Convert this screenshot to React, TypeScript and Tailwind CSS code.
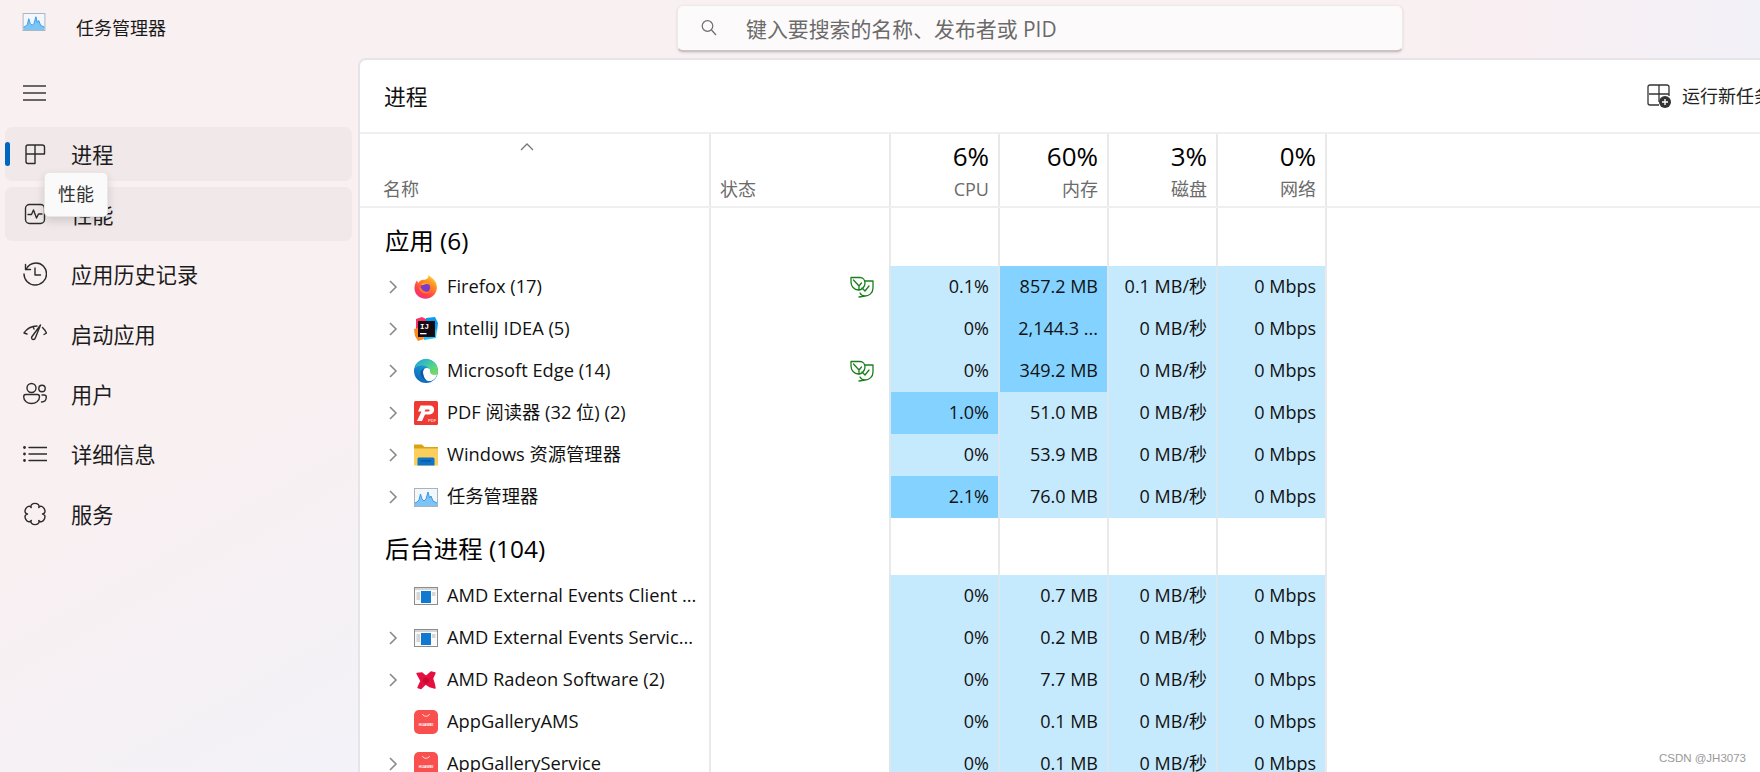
import type { ReactNode } from 'react'

const FONT = "font-['Open_Sans','Noto_Sans_CJK_SC',sans-serif]"

function TaskIcon({ className }: { className: string }) {
  return (
    <svg className={className} viewBox="0 0 24 19">
      <rect x="0.5" y="0.5" width="23" height="18" fill="#f2f7fb" stroke="#a9b3bd" />
      <path d="M1 15 L3 14 L5 12 L6.5 6 L8 11 L10 13 L12 11 L14 4 L15.5 10 L17 8 L19 13 L23 15 V18 H1 Z" fill="#7cc4f5" />
      <path d="M1 15 L3 14 L5 12 L6.5 6 L8 11 L10 13 L12 11 L14 4 L15.5 10 L17 8 L19 13 L23 15" fill="none" stroke="#2f8fe0" strokeWidth="0.9" />
    </svg>
  )
}

function FirefoxIcon() {
  return (
    <svg className="w-6 h-6" viewBox="0 0 24 24">
      <defs>
        <linearGradient id="ffa" x1="0.8" y1="0" x2="0.2" y2="1">
          <stop offset="0" stopColor="#ffd53a" />
          <stop offset="0.35" stopColor="#ff8a22" />
          <stop offset="0.75" stopColor="#ff3b50" />
          <stop offset="1" stopColor="#f0308a" />
        </linearGradient>
      </defs>
      <path d="M14.5 0 C17 2.5 20 4 21.5 7 C23.5 11 23.5 16 20 20 C17 23.5 11.5 24.5 7.5 23 C3 21.5 0.5 17.5 0.5 13 C0.5 10.5 1.2 8 2.8 5.5 L4.5 8 C5.5 5.8 7.5 5 9.5 4.8 C12 4.5 14.5 4 14.5 0 Z" fill="url(#ffa)" />
      <circle cx="11.5" cy="12.5" r="4.6" fill="#7a3bc8" />
      <path d="M6.5 9.5 C9 6.8 13 6.8 16 9.5 C13.5 8.6 11.5 8.8 10 9.8 C9 10.4 8 10.3 6.5 9.5 Z" fill="#ffa12a" />
      <path d="M5 12.5 C5.5 18 12 20.5 17 16.5 C13.5 17.8 9 17 7 13 Z" fill="#ff7a2a" />
    </svg>
  )
}

function IdeaIcon() {
  return (
    <svg className="w-6 h-6" viewBox="0 0 24 24">
      <path d="M2 2 L8 0 L12 2 L12 12 L2 14 Z" fill="#f9326c" />
      <path d="M0 12 L8 10 L10 22 L4 24 L1 19 Z" fill="#fc8a1c" />
      <path d="M12 1 L21 0 L24 6 L23 14 L12 12 Z" fill="#0a9cf0" />
      <path d="M10 14 L23 12 L22 21 L10 23 Z" fill="#19c4f0" />
      <rect x="4" y="4" width="17" height="16" fill="#140a10" />
      <text x="6" y="11.5" fontSize="7.5" fontWeight="700" fill="#fff" fontFamily="'Liberation Mono',monospace">IJ</text>
      <rect x="6" y="16" width="6.5" height="1.3" fill="#fff" />
    </svg>
  )
}

function EdgeIcon() {
  return (
    <svg className="w-6 h-6" viewBox="0 0 24 24">
      <defs>
        <linearGradient id="ega" x1="0" y1="1" x2="0.5" y2="0">
          <stop offset="0" stopColor="#0a5fb4" />
          <stop offset="1" stopColor="#23a6df" />
        </linearGradient>
        <linearGradient id="egb" x1="0.2" y1="0" x2="1" y2="0.8">
          <stop offset="0" stopColor="#25a9d9" />
          <stop offset="0.6" stopColor="#4fd38c" />
          <stop offset="1" stopColor="#7ddb5a" />
        </linearGradient>
      </defs>
      <circle cx="12" cy="12" r="12" fill="url(#ega)" />
      <path d="M1 9 C3 3 8 0 12 0 C19 0 24 6 24 12.5 C24 15.5 21 17 18 16.5 C15 16 16 12 15 10 C13 6 5 5 1 9 Z" fill="url(#egb)" />
      <path d="M9 13 C9 9 13 8 15.5 10 C16.5 11.5 15.5 14 17.5 15.2 C19.5 16.3 21.5 16 23 15.2 C22 20 18 22.5 14.5 22 C11 21.5 9 17 9 13 Z" fill="#fff" />
      <path d="M9 13 C9 17 11 21.5 14.5 22 C15.5 22.2 16.5 22.1 17.5 21.8 C14 23 8 20 6.5 15.5 C6 13 7.5 10 10.5 9.5 C9.5 10.5 9 11.5 9 13 Z" fill="#0c59a4" />
    </svg>
  )
}

function PdfIcon() {
  return (
    <svg className="w-6 h-6" viewBox="0 0 24 24">
      <rect width="24" height="24" rx="1.5" fill="#ee3a32" />
      <path d="M3 20 L7.5 10.5 H4 L6.5 4.5 H16.5 C21.5 4.5 21.5 13.5 15.5 13.5 H11 L8 20 Z M11.5 8.5 L10.6 10.5 H14.5 C16 10.5 16 8.5 14.5 8.5 Z" fill="#fff" fillRule="evenodd" />
      <text x="14" y="20.5" fontSize="4.2" fontWeight="700" fill="#f9c9c6" fontFamily="'Liberation Sans',sans-serif">PDF</text>
    </svg>
  )
}

function FolderIcon() {
  return (
    <svg className="w-6 h-6" viewBox="0 0 24 21">
      <path d="M0 0 H8 L10.5 2.5 H24 V6 H0 Z" fill="#dca216" />
      <rect y="4" width="24" height="17" fill="#fbcf5b" />
      <path d="M3.5 21 V14.5 C3.5 13.5 4.2 13 5 13 H18.5 C19.5 13 20.5 13.5 20.5 14.5 V21 Z" fill="#0d74c8" />
      <rect x="7" y="16" width="10" height="1" fill="#094d8a" />
    </svg>
  )
}

function AmdExeIcon() {
  return (
    <svg className="w-6 h-[18px]" viewBox="0 0 24 18">
      <rect x="0.5" y="0.5" width="23" height="17" fill="#fafafa" stroke="#8c8c8c" />
      <rect x="1" y="1" width="22" height="2" fill="#d5d5d5" />
      <path d="M2.5 6 H6 M2.5 8 H6 M2.5 10 H6 M2.5 12 H6 M18 6 H21.5 M18 8 H21.5" stroke="#aaa" strokeWidth="0.9" />
      <rect x="7" y="4" width="10" height="12" fill="#0f7ad0" />
    </svg>
  )
}

function RadeonIcon() {
  return (
    <svg className="w-6 h-6" viewBox="0 0 24 24">
      <path d="M3 5.5 L8 5 L12 8.5 L17 4 L21 5 L18.5 10.5 L20.5 17 L21 20 L15.5 18.5 L11.5 16 L7 20.5 L4 19.5 L7 13 Z" fill="#e5103f" stroke="#e5103f" strokeWidth="1.4" strokeLinejoin="round" />
      <circle cx="12" cy="12.5" r="3" fill="#c80b33" />
    </svg>
  )
}

function HuaweiIcon() {
  return (
    <svg className="w-6 h-6" viewBox="0 0 24 24">
      <rect width="24" height="24" rx="5" fill="#f9504f" />
      <path d="M8.5 4 C9 7 15 7 15.5 4" fill="none" stroke="#fff" strokeWidth="0.8" />
      <text x="12" y="15.5" textAnchor="middle" fontSize="3.6" fontWeight="700" fill="#fff" fontFamily="'Liberation Sans',sans-serif">HUAWEI</text>
    </svg>
  )
}

function LeafIcon() {
  return (
    <svg className="w-6 h-[22px] ml-auto" viewBox="0 0 24 22" fill="none" stroke="#1a7f1a" strokeWidth="1.3" strokeLinejoin="round" strokeLinecap="round">
      <path d="M1 1.5 H10 C13 1.5 15 4 15 7 C15 11 12 14 8.5 14 C4 14 1 10 1 6 Z" />
      <path d="M3.5 4 L9 10 V14 M9 10 L11.5 7" />
      <path d="M15 5 H23 V12 C23 17 19 20 15 20 C13 20 11 19 10 17 M15 20 L9 21 M15 15 L19 10 M15 15 L12 12" />
    </svg>
  )
}

function NavIcon({ name }: { name: string }) {
  const common = { fill: 'none', stroke: '#2c2c2c', strokeWidth: 1.4, strokeLinecap: 'round' as const, strokeLinejoin: 'round' as const }
  if (name === 'proc') {
    return (
      <svg className="w-6 h-6" viewBox="0 0 24 24" {...common}>
        <path d="M3 5 C3 3.8 3.8 3 5 3 H19 C20.2 3 21.5 3.8 21.5 5 V12 H12 V21.5 H5 C3.8 21.5 3 20.7 3 19.5 Z M12 3 V12 M3 12 H12" />
      </svg>
    )
  }
  if (name === 'perf') {
    return (
      <svg className="w-6 h-6" viewBox="0 0 24 24" {...common}>
        <rect x="2.5" y="2.5" width="19" height="19" rx="4" />
        <path d="M5 12.5 H8.5 L10.5 8 L13.5 16 L15.5 12 H19" />
      </svg>
    )
  }
  if (name === 'history') {
    return (
      <svg className="w-6 h-6" viewBox="0 0 24 24" {...common}>
        <path d="M2.5 2.5 V7.5 H7.5" />
        <path d="M3 7.5 C5 3.5 9 1 13 1 C19 1 23.5 6 23.5 12 C23.5 18 18.5 23 12 23 C6 23 1 18 1 12" />
        <path d="M12 6 V13 H17.5" />
      </svg>
    )
  }
  if (name === 'startup') {
    return (
      <svg className="w-6 h-6" viewBox="0 0 24 24" {...common}>
        <path d="M1 11 C4 6.5 9 4 14 4 M19.5 5.5 C21 7 22.5 9 23.5 11 M1 11 L4 12 M23.5 11 L21 12.5 M10 4.5 L11 7" />
        <path d="M17.5 3 L12.5 15.5 C11.5 18.5 8 18 8.7 15 Z" />
      </svg>
    )
  }
  if (name === 'users') {
    return (
      <svg className="w-6 h-6" viewBox="0 0 24 24" {...common}>
        <circle cx="8.5" cy="6" r="4.5" />
        <path d="M2.5 12.5 H14.5 C16 12.5 16.5 13.5 16.5 15 C16.5 19 12.5 21.5 8.5 21.5 C4.5 21.5 0.7 19 0.7 15 C0.7 13.5 1.2 12.5 2.5 12.5 Z" />
        <circle cx="19" cy="6.5" r="3.2" />
        <path d="M19 13 H21 C22.5 13 23.3 14 23.3 15 C23.3 18 21.5 20 18.5 20" />
      </svg>
    )
  }
  if (name === 'list') {
    return (
      <svg className="w-6 h-6" viewBox="0 0 24 24" {...common}>
        <path d="M6 5.5 H24 M6 12 H24 M6 18.5 H24" />
        <circle cx="1.5" cy="5.5" r="0.7" fill="#2c2c2c" />
        <circle cx="1.5" cy="12" r="0.7" fill="#2c2c2c" />
        <circle cx="1.5" cy="18.5" r="0.7" fill="#2c2c2c" />
      </svg>
    )
  }
  return (
    <svg className="w-6 h-6" viewBox="0 0 24 24" {...common}>
      <path d="M8.25 5.5 C6 0 18 0 15.75 5.5 C19.39 0.8 25.39 11.2 19.5 12 C25.39 12.8 19.39 23.2 15.75 18.5 C18 24 6 24 8.25 18.5 C4.61 23.2 -1.39 12.8 4.5 12 C-1.39 11.2 4.61 0.8 8.25 5.5 Z" />
    </svg>
  )
}

const navItems = [
  { icon: 'proc', label: '进程', hl: true, active: true },
  { icon: 'perf', label: '性能', hl: true },
  { icon: 'history', label: '应用历史记录' },
  { icon: 'startup', label: '启动应用' },
  { icon: 'users', label: '用户' },
  { icon: 'list', label: '详细信息' },
  { icon: 'services', label: '服务' },
]

type Row = {
  name: string
  icon: ReactNode
  expand: boolean
  leaf?: boolean
  cpu: string
  mem: string
  disk: string
  cpuHot?: boolean
  memHot?: boolean
}

const apps: Row[] = [
  { name: 'Firefox (17)', icon: <FirefoxIcon />, expand: true, leaf: true, cpu: '0.1%', mem: '857.2 MB', disk: '0.1 MB/秒', memHot: true },
  { name: 'IntelliJ IDEA (5)', icon: <IdeaIcon />, expand: true, cpu: '0%', mem: '2,144.3 ...', disk: '0 MB/秒', memHot: true },
  { name: 'Microsoft Edge (14)', icon: <EdgeIcon />, expand: true, leaf: true, cpu: '0%', mem: '349.2 MB', disk: '0 MB/秒', memHot: true },
  { name: 'PDF 阅读器 (32 位) (2)', icon: <PdfIcon />, expand: true, cpu: '1.0%', mem: '51.0 MB', disk: '0 MB/秒', cpuHot: true },
  { name: 'Windows 资源管理器', icon: <FolderIcon />, expand: true, cpu: '0%', mem: '53.9 MB', disk: '0 MB/秒' },
  { name: '任务管理器', icon: <TaskIcon className="w-6 h-[19px]" />, expand: true, cpu: '2.1%', mem: '76.0 MB', disk: '0 MB/秒', cpuHot: true },
]

const background: Row[] = [
  { name: 'AMD External Events Client ...', icon: <AmdExeIcon />, expand: false, cpu: '0%', mem: '0.7 MB', disk: '0 MB/秒' },
  { name: 'AMD External Events Servic...', icon: <AmdExeIcon />, expand: true, cpu: '0%', mem: '0.2 MB', disk: '0 MB/秒' },
  { name: 'AMD Radeon Software (2)', icon: <RadeonIcon />, expand: true, cpu: '0%', mem: '7.7 MB', disk: '0 MB/秒' },
  { name: 'AppGalleryAMS', icon: <HuaweiIcon />, expand: false, cpu: '0%', mem: '0.1 MB', disk: '0 MB/秒' },
  { name: 'AppGalleryService', icon: <HuaweiIcon />, expand: true, cpu: '0%', mem: '0.1 MB', disk: '0 MB/秒' },
]

const GRID = 'grid grid-cols-[349px_180px_109px_109px_109px_109px_1fr]'
const LINE = 'border-l-2 border-[#e9e9e9]'

function GroupRow({ title, height, offset }: { title: string; height: string; offset: string }) {
  return (
    <div className={`${GRID} ${height}`}>
      <div className={`pl-[25px] flex items-center text-[24.4px] text-black whitespace-nowrap ${offset}`}>{title}</div>
      <div className={LINE} />
      <div className={LINE} />
      <div className={LINE} />
      <div className={LINE} />
      <div className={LINE} />
      <div className={LINE} />
    </div>
  )
}

function ValueCell({ value, hot }: { value: string; hot?: boolean }) {
  return (
    <div className={`flex items-center justify-end pr-[9px] pb-[2px] border-l-2 border-[#dbe7ee] text-[18px] text-[#111] ${hot ? 'bg-[#84d2ff]' : 'bg-[#c5e9fd]'}`}>
      {value}
    </div>
  )
}

function ProcRow({ row }: { row: Row }) {
  return (
    <div className={`${GRID} h-[42px]`}>
      <div className="flex items-center min-w-0">
        <div className="w-[54px] pl-[28px] shrink-0">
          {row.expand && (
            <svg className="w-[10px] h-[16px]" viewBox="0 0 10 16" fill="none" stroke="#8a8a8a" strokeWidth="1.6">
              <path d="M2 2 L8 8 L2 14" />
            </svg>
          )}
        </div>
        <div className="w-[24px] shrink-0 flex items-center">{row.icon}</div>
        <span className="ml-[9px] pb-[2px] text-[18.3px] text-[#111] whitespace-nowrap">{row.name}</span>
      </div>
      <div className={`${LINE} flex items-center pr-[15px]`}>{row.leaf && <LeafIcon />}</div>
      <ValueCell value={row.cpu} hot={row.cpuHot} />
      <ValueCell value={row.mem} hot={row.memHot} />
      <ValueCell value={row.disk} />
      <ValueCell value="0 Mbps" />
      <div className={LINE} />
    </div>
  )
}

function HeadCell({ pct, label }: { pct: string; label: string }) {
  return (
    <div className={`${LINE} flex flex-col items-end pr-[9px] pt-[4px]`}>
      <span className="text-[26px] leading-[36px] text-black">{pct}</span>
      <span className="text-[18px] leading-[28px] mt-[1px] text-[#6b6b6b]">{label}</span>
    </div>
  )
}

export default function App() {
  return (
    <div className={`relative h-screen w-screen overflow-hidden flex flex-col bg-[linear-gradient(150deg,#f9f0f1_0%,#f9f0f2_32%,#f0f3fa_62%,#f0f3f8_100%)] ${FONT}`}>
      {/* 标题栏 */}
      <div className="h-[58px] shrink-0 flex bg-[linear-gradient(90deg,#f9f0f1_0%,#f9f0f1_80%,#f9eff3_86%,#f2f1f7_100%)]">
        <div className="w-[677px] shrink-0 flex items-start pl-[22px]">
          <TaskIcon className="w-6 h-[18px] mt-[13px]" />
          <span className="ml-[30px] mt-[15px] text-[18px] leading-[26px] text-[#1a1a1a]">任务管理器</span>
        </div>
        <div className="w-[726px] h-[47px] mt-[5px] flex items-center rounded-[6px] bg-[#fdfafb] border border-[#efe9ea] border-b-2 border-b-[#c9c3c5] shadow-sm">
          <svg className="ml-[22px] w-[18px] h-[18px]" viewBox="0 0 18 18" fill="none" stroke="#6d6d6d" strokeWidth="1.2">
            <circle cx="7.5" cy="7" r="5.3" />
            <path d="M11.5 11 L16 16" />
          </svg>
          <span className="ml-[28px] pt-[3px] text-[20.9px] text-[#6a6a6a]">键入要搜索的名称、发布者或 PID</span>
        </div>
      </div>

      <div className="flex-1 min-h-0 flex">
        {/* 侧边栏 */}
        <div className="w-[358px] shrink-0">
          <div className="h-[69px] flex items-center pl-[23px]">
            <svg className="w-[23px] h-[16px]" viewBox="0 0 23 16" stroke="#3a3a3a" strokeWidth="1.4">
              <path d="M0 1 H23 M0 8 H23 M0 15 H23" />
            </svg>
          </div>
          <div className="flex flex-col gap-[6px] pl-[5px]">
            {navItems.map((item) => (
              <div key={item.label} className={`relative h-[54px] w-[347px] flex items-center rounded-[7px] ${item.hl ? 'bg-[#f0e8e9]' : ''}`}>
                {item.active && <div className="absolute left-0 top-[15px] w-[5px] h-[24px] rounded-full bg-[#0067c0]" />}
                <div className="ml-[18px] w-[24px] flex justify-center">
                  <NavIcon name={item.icon} />
                </div>
                <span className="ml-[24px] pt-[2px] text-[21.2px] text-[#1c1c1c]">{item.label}</span>
              </div>
            ))}
          </div>
        </div>

        {/* 进程面板 */}
        <div className="w-[1440px] shrink-0 bg-white rounded-tl-[8px] border-l-2 border-t-2 border-[#e6e4e8] overflow-hidden">
          <div className="h-[72px] flex items-center justify-between pl-[24px] pr-[26px]">
            <span className="pt-[2px] text-[21.8px] text-[#111]">进程</span>
            <div className="flex items-center">
              <svg className="w-6 h-6" viewBox="0 0 24 24">
                <path d="M12 1 V18 M2 10 H12 M12 10 H22 V12 M22 10 V3 C22 1.8 21 1 20 1 H3 C1.8 1 1 1.8 1 3 V19 C1 20.2 1.8 21 3 21 H12" fill="none" stroke="#333" strokeWidth="1.3" />
                <circle cx="18" cy="18" r="6" fill="#333" />
                <path d="M18 15 V21 M15 18 H21" stroke="#fff" strokeWidth="1.4" />
              </svg>
              <span className="ml-[11px] text-[18px] text-[#222]">运行新任务</span>
            </div>
          </div>

          {/* 表头 */}
          <div className={`${GRID} h-[76px] border-y-2 border-[#efefef]`}>
            <div className="relative flex items-end pl-[23px] pb-[3px] text-[18px] text-[#6b6b6b]">
              <svg className="absolute left-[160px] top-[9px] w-[14px] h-[8px]" viewBox="0 0 14 8" fill="none" stroke="#777" strokeWidth="1.3">
                <path d="M1 7 L7 1 L13 7" />
              </svg>
              名称
            </div>
            <div className={`${LINE} flex items-end pl-[9px] pb-[3px] text-[18px] text-[#6b6b6b]`}>状态</div>
            <HeadCell pct="6%" label="CPU" />
            <HeadCell pct="60%" label="内存" />
            <HeadCell pct="3%" label="磁盘" />
            <HeadCell pct="0%" label="网络" />
            <div className={LINE} />
          </div>

          <GroupRow title="应用 (6)" height="h-[58px]" offset="pt-[9px]" />
          {apps.map((row) => (
            <ProcRow key={row.name} row={row} />
          ))}
          <GroupRow title="后台进程 (104)" height="h-[57px]" offset="pt-[6px]" />
          {background.map((row) => (
            <ProcRow key={row.name} row={row} />
          ))}
        </div>
      </div>

      {/* 悬浮提示 */}
      <div className="absolute left-[44px] top-[172px] w-[64px] h-[45px] flex items-center justify-center rounded-[5px] bg-[#fbfafa] border border-[#ebe6e6] shadow-[0_4px_10px_rgba(0,0,0,0.14)] text-[18px] text-[#333]">
        性能
      </div>

      {/* 水印 */}
      <div className="absolute right-[14px] bottom-[7px] font-['Liberation_Sans',sans-serif] text-[11.5px] leading-[14px] text-[#999]">
        CSDN @JH3073
      </div>
    </div>
  )
}
